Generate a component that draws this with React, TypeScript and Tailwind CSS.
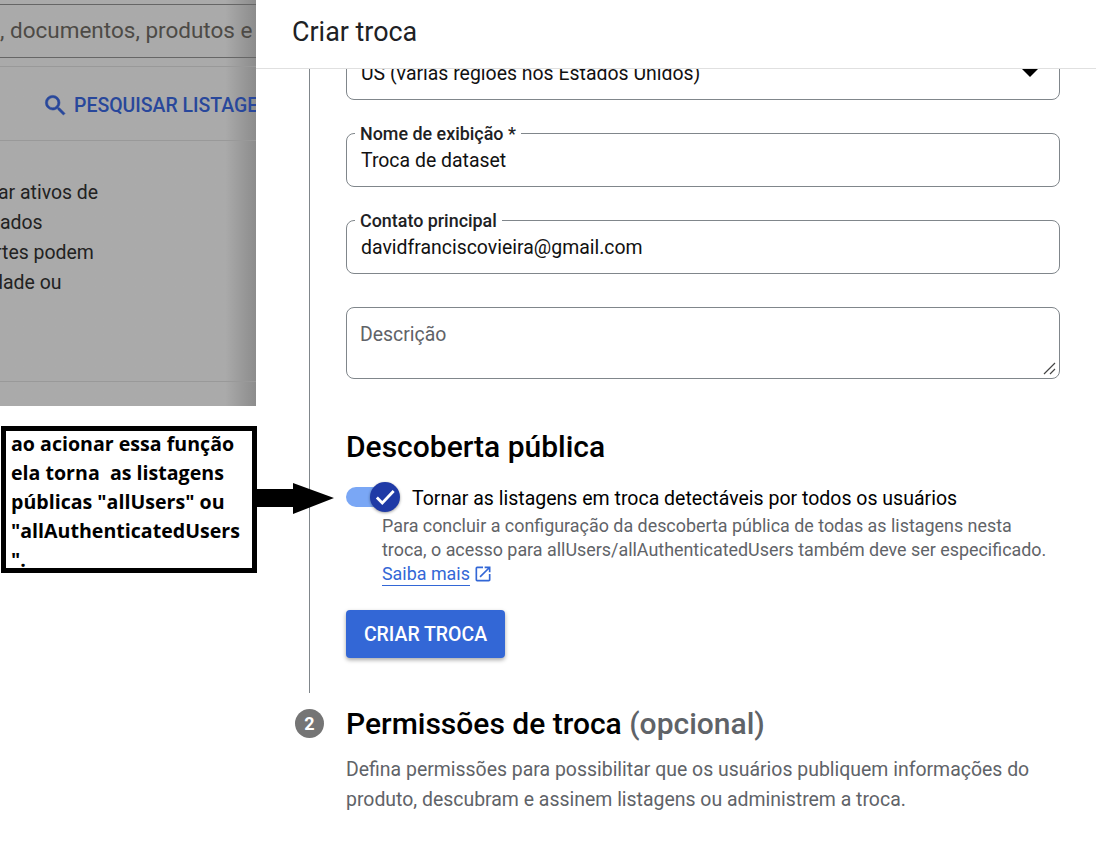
import React from "react";

function Field({ label, value, className }: { label: string; value: string; className?: string }) {
  return (
    <div className={"relative h-[54px] rounded-[8px] border border-[#80868b] pl-[14px] pt-[15px] text-[19.45px] leading-[24px] text-[#111111] " + (className ?? "")}>
      <span className="absolute left-[8px] top-[-11px] bg-white px-[5px] text-[17.9px] leading-[22px] font-medium text-[#202124]">{label}</span>
      {value}
    </div>
  );
}

export default function App() {
  return (
    <div className="relative flex h-[863px] w-[1096px] overflow-hidden bg-white font-['Roboto',sans-serif]">
      <div className="h-[406px] w-[256px] shrink-0 overflow-hidden bg-[#aaaaaa] bg-gradient-to-r from-[#aaaaaa] from-[88%] to-[#8c8c8c] text-[#1f1f1f]">
        <div className="mt-[4px] flex h-[54px] items-center overflow-hidden whitespace-nowrap border-y border-[#666666] text-[22.5px] text-[#4d4a46]">
          , documentos, produtos e
        </div>
        <div className="mt-[8px] flex h-[75px] items-center overflow-hidden whitespace-nowrap border-y border-[#999999] pl-[42px] pt-[4px] text-[19.45px] font-medium text-[#28479b]">
          <svg width="27" height="27" viewBox="0 0 24 24" fill="currentColor" stroke="currentColor" strokeWidth="0.5" className="mr-[5px] shrink-0">
            <path d="M15.5 14h-.79l-.28-.27A6.47 6.47 0 0 0 16 9.5 6.5 6.5 0 1 0 9.5 16c1.61 0 3.09-.59 4.23-1.57l.27.28v.79l5 4.99L20.49 19l-4.99-5zm-6 0C7.01 14 5 11.99 5 9.5S7.01 5 9.5 5 14 7.01 14 9.5 11.99 14 9.5 14z" />
          </svg>
          PESQUISAR LISTAGENS
        </div>
        <div className="h-[241px] overflow-hidden border-b border-[#999999] pt-[37px] text-[19.45px] leading-[30px] text-[#222222]">
          <div className="ml-[-2px]">ar ativos de</div>
          <div>ados</div>
          <div className="ml-[-5px]">rtes podem</div>
          <div className="ml-[-8px]">dade ou</div>
        </div>
      </div>

      <div className="flex h-full flex-1 flex-col overflow-hidden bg-white">
        <div className="flex h-[69px] shrink-0 items-center border-b border-[#e0e0e0] pb-[4px] pl-[36px] text-[26.9px] text-[#202124]">
          Criar troca
        </div>
        <div className="flex flex-1 flex-col overflow-hidden">
          <div className="flex">
            <div className="ml-[53px] h-[624px] w-px shrink-0 bg-[#80868b]" />
            <div className="ml-[36px] w-[714px] shrink-0">
              <div className="relative mt-[-23px] h-[54px] rounded-[8px] border border-[#80868b] pl-[14px] pt-[15px] text-[19.45px] leading-[24px] text-[#111111]">
                US (várias regiões nos Estados Unidos)
                <span className="absolute right-[21px] top-[22px] h-0 w-0 border-x-[8px] border-t-[8px] border-x-transparent border-t-black" />
              </div>
              <Field label="Nome de exibição *" value="Troca de dataset" className="mt-[33px]" />
              <Field label="Contato principal" value="davidfranciscovieira@gmail.com" className="mt-[33px]" />
              <div className="relative mt-[33px] h-[72px] rounded-[8px] border border-[#80868b] pl-[13px] pt-[15px] text-[19.45px] leading-[24px] text-[#5f6368]">
                Descrição
                <svg width="14" height="14" viewBox="0 0 14 14" className="absolute bottom-[3px] right-[3px]" stroke="#444444" strokeWidth="1.2">
                  <path d="M2 13 L13 2 M8 13 L13 8" />
                </svg>
              </div>
              <h2 className="mt-[50px] text-[30px] font-medium leading-[36px] text-black">Descoberta pública</h2>
              <div className="relative mt-[15px] flex h-[34px] items-center">
                <div className="h-[20px] w-[40px] rounded-full bg-[#7aa7f5]" />
                <div className="absolute left-[24px] top-[2px] flex h-[30px] w-[30px] items-center justify-center rounded-full bg-[#1f3aa6] shadow-[0_1px_3px_rgba(0,0,0,0.4)]">
                  <svg width="26" height="26" viewBox="0 0 24 24" fill="none" stroke="white" strokeWidth="2.6">
                    <path d="M4.5 12.5 L9.5 17.5 L20 6.5" />
                  </svg>
                </div>
                <span className="ml-[26px] pt-[4px] text-[19.5px] leading-[24px] text-black">Tornar as listagens em troca detectáveis por todos os usuários</span>
              </div>
              <div className="ml-[36px] w-[672px] text-[17.9px] leading-[24px] text-[#5f6368]">
                <p>Para concluir a configuração da descoberta pública de todas as listagens nesta troca, o acesso para allUsers/allAuthenticatedUsers também deve ser especificado.</p>
                <div className="flex items-center text-[#3367d6]">
                  <span className="border-b border-[#3367d6] leading-[23px]">Saiba mais</span>
                  <svg width="20" height="20" viewBox="0 0 24 24" fill="currentColor" className="ml-[3px]">
                    <path d="M19 19H5V5h7V3H5a2 2 0 0 0-2 2v14a2 2 0 0 0 2 2h14c1.1 0 2-.9 2-2v-7h-2v7zM14 3v2h3.59l-9.83 9.83 1.41 1.41L19 6.41V10h2V3h-7z" />
                  </svg>
                </div>
              </div>
              <button className="mt-[24px] flex h-[48px] w-[159px] items-center justify-center rounded-[4px] bg-[#3367d6] pt-[1px] text-[19.45px] font-medium text-white shadow-[0_2px_4px_rgba(0,0,0,0.35)]">
                CRIAR TROCA
              </button>
            </div>
          </div>
          <div className="mt-[16px] flex items-start">
            <div className="ml-[39px] flex h-[29px] w-[29px] shrink-0 items-center justify-center rounded-full bg-[#757575] text-[18px] font-bold text-white">2</div>
            <div className="ml-[22px] w-[714px]">
              <h2 className="text-[30px] font-medium leading-[30px] text-black">
                Permissões de troca <span className="text-[#5f6368]">(opcional)</span>
              </h2>
              <p className="mt-[16px] text-[19.45px] leading-[30px] text-[#5f6368]">
                Defina permissões para possibilitar que os usuários publiquem informações do produto, descubram e assinem listagens ou administrem a troca.
              </p>
            </div>
          </div>
        </div>
      </div>

      <div className="absolute left-[1px] top-[426px] h-[147px] w-[256px] overflow-hidden border-[5px] border-black bg-white pl-[5px] font-['Open_Sans',sans-serif] text-[19.6px] font-bold leading-[29px] text-black">
        <div className="mt-[-2px]">ao acionar essa função</div>
        <div className="whitespace-pre">ela torna  as listagens</div>
        <div>públicas "allUsers" ou</div>
        <div>"allAuthenticatedUsers</div>
        <div>".</div>
      </div>
      <svg className="absolute left-[256px] top-[482px]" width="80" height="34" viewBox="0 0 80 34">
        <path d="M0 7 H37 V1 L78 16 L37 32 V25 H0 Z" fill="black" />
      </svg>
    </div>
  );
}
